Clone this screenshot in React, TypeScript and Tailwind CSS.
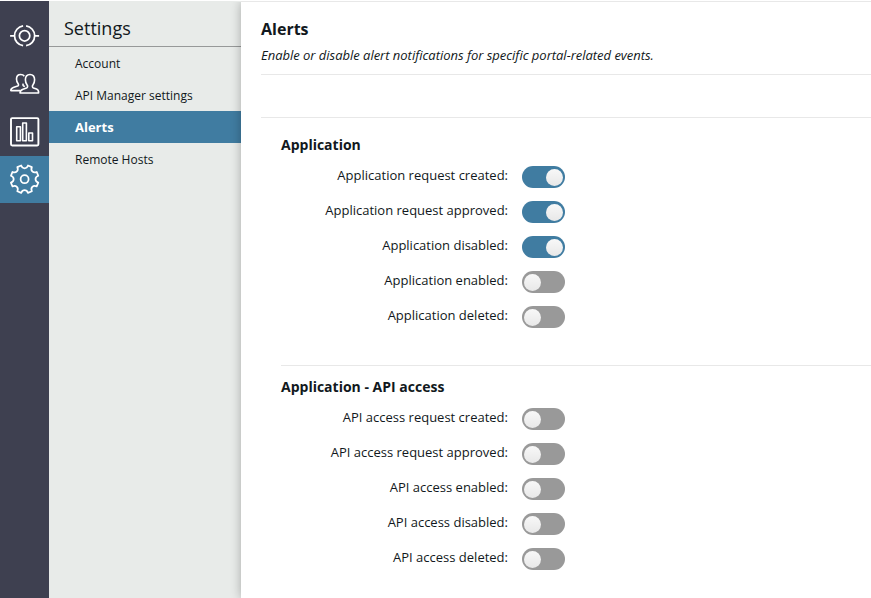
import type { ReactNode } from 'react';

type Alert = { label: string; on: boolean };

const applicationAlerts: Alert[] = [
  { label: 'Application request created:', on: true },
  { label: 'Application request approved:', on: true },
  { label: 'Application disabled:', on: true },
  { label: 'Application enabled:', on: false },
  { label: 'Application deleted:', on: false },
];

const apiAccessAlerts: Alert[] = [
  { label: 'API access request created:', on: false },
  { label: 'API access request approved:', on: false },
  { label: 'API access enabled:', on: false },
  { label: 'API access disabled:', on: false },
  { label: 'API access deleted:', on: false },
];

const menu = ['Account', 'API Manager settings', 'Alerts', 'Remote Hosts'];

// Outline of an eight-toothed gear, with rounded notches between the teeth.
function gearPath(cx: number, cy: number) {
  const at = (deg: number, r: number) => {
    const t = (deg * Math.PI) / 180;
    return `${(cx + r * Math.sin(t)).toFixed(2)} ${(cy - r * Math.cos(t)).toFixed(2)}`;
  };
  let d = `M${at(-14, 14.1)}`;
  for (let i = 0; i < 8; i++) {
    const a = i * 45;
    d += `C${at(a - 11, 10.2)} ${at(a + 11, 10.2)} ${at(a + 14, 14.1)}L${at(a + 31, 14.1)}`;
  }
  return d + 'Z';
}

function Icon({ children }: { children: ReactNode }) {
  return (
    <svg className="overflow-visible" width="30" height="30" viewBox="-0.6 0 30 30" fill="none" stroke="#fff" strokeWidth="1.75" strokeLinejoin="round">
      {children}
    </svg>
  );
}

function Rail() {
  return (
    <nav className="flex w-[49px] shrink-0 flex-col bg-[#3e4050] pt-[11px] pr-px">
      <div className="flex h-12 items-center justify-center">
        <Icon>
          <circle cx="15" cy="14.8" r="5.2" />
          <path d="M13.5 4.9A10 10 0 0 0 13.5 24.7M16.5 24.7A10 10 0 0 0 16.5 4.9M.5 14.8H5M25 14.8h4.5" />
        </Icon>
      </div>
      <div className="flex h-12 items-center justify-center">
        <Icon>
          <path d="M10.4 24h18.6c.2-2.5-.4-3.4-2.1-4l-3-1c-1.3-.5-1.4-2-.6-3 1.2-1.5 1.7-3.2 1.7-5.2 0-3.4-1.6-5.3-4.6-5.3s-4.6 1.9-4.6 5.3c0 2 .5 3.7 1.7 5.2.8 1 .7 2.5-.6 3l-3.5 1.2c-2 .7-3 1.7-3 3.8Z" strokeWidth="1.6" />
          <path d="M14.7 7.2C13.9 6 12.6 5.5 11.1 5.5c-2.6 0-4.2 1.6-4.2 4.6 0 1.9.5 3.2 1.5 4.5.8 1 .7 2-.4 2.5l-4.3 1.5C2 19.2 1.2 19.9 1.2 21.6H11M13.8 14.6c-.7 1-.6 2 .3 2.4l1.2.5" strokeWidth="1.6" />
        </Icon>
      </div>
      <div className="flex h-12 items-center justify-center">
        <Icon>
          <rect x="1.4" y="1.1" width="27.4" height="27.4" rx="1.2" strokeWidth="1.9" />
          <path d="M7.1 9.8h3.7v13.9H7.1zM13.1 6h3.7v17.7h-3.7zM19.2 16h3.7v7.7h-3.7z" strokeWidth="1.6" />
        </Icon>
      </div>
      <div className="-mr-px flex h-[47px] items-center justify-center bg-[#407ca1] pr-px">
        <Icon>
          <circle cx="15" cy="14.2" r="4" />
          <path d={gearPath(15, 14.2)} />
        </Icon>
      </div>
    </nav>
  );
}

function SettingsMenu() {
  return (
    <aside className="w-48 shrink-0 bg-[#e8ebe9]">
      <h1 className="h-[46px] border-b border-[#979999] pl-[15px] text-[18px] leading-[54px]">Settings</h1>
      <ul>
        {menu.map((item) => (
          <li
            key={item}
            className={
              item === 'Alerts'
                ? 'h-8 bg-[#407ca1] pl-[26px] text-[13px] leading-8 font-bold text-white'
                : 'h-8 pl-[26px] text-[12px] leading-[33px]'
            }
          >
            {item}
          </li>
        ))}
      </ul>
    </aside>
  );
}

function Toggle({ on }: { on: boolean }) {
  return (
    <span className={on ? 'flex h-[22px] w-[43px] items-center justify-end rounded-full bg-[#407ca1] px-[2px]' : 'flex h-[22px] w-[43px] items-center rounded-full bg-[#999] px-[2px]'}>
      <span className="size-[17px] rounded-full bg-linear-to-b from-[#f8f8f8] to-[#e8e8e8]" />
    </span>
  );
}

function Section({ title, alerts }: { title: string; alerts: Alert[] }) {
  return (
    <section>
      <h3 className="h-9 text-[14px] leading-9 font-bold">{title}</h3>
      {alerts.map((a) => (
        <div key={a.label} className="flex h-[35px] items-start">
          <span className="w-[227px] text-right text-[13px] leading-6">{a.label}</span>
          <span className="ml-3.5 pt-[3px]">
            <Toggle on={a.on} />
          </span>
        </div>
      ))}
    </section>
  );
}

export default function App() {
  return (
    <div className="flex h-[598px] w-[871px] overflow-hidden bg-white pt-px font-['Open_Sans',sans-serif] text-[#111820]">
      <Rail />
      <SettingsMenu />
      <div className="min-w-0 flex-1 border-t border-[#e8e8e8]">
        <main className="h-full bg-white pl-5 shadow-[0_0_10px_rgba(0,0,0,0.28)] [clip-path:inset(0_0_0_-12px)]">
          <header className="h-[73px] border-b border-[#e8e8e8] pt-[17px]">
            <h2 className="h-5 text-[16px] leading-5 font-bold">Alerts</h2>
            <p className="mt-1.5 text-[13px] leading-5 tracking-[-0.02px] italic">
              Enable or disable alert notifications for specific portal-related events.
            </p>
          </header>
          <div className="h-[43px] border-b border-[#e8e8e8]" />
          <div className="pl-5">
            <div className="pt-[9px]">
              <Section title="Application" alerts={applicationAlerts} />
            </div>
            <div className="mt-[27px] border-t border-[#e8e8e8] pt-[3px]">
              <Section title="Application - API access" alerts={apiAccessAlerts} />
            </div>
          </div>
        </main>
      </div>
    </div>
  );
}
